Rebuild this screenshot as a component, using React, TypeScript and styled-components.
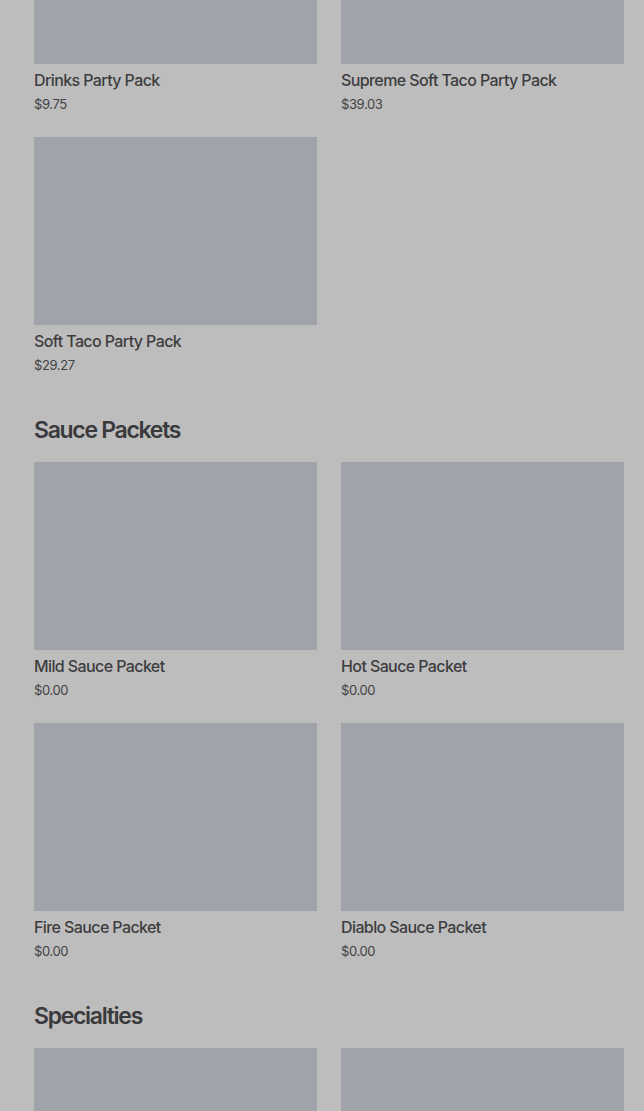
import styled, { createGlobalStyle } from "styled-components";

type Item = { name?: string; price?: string };

const partyPacks: Item[] = [
  { name: "Drinks Party Pack", price: "$9.75" },
  { name: "Supreme Soft Taco Party Pack", price: "$39.03" },
  { name: "Soft Taco Party Pack", price: "$29.27" },
];

const saucePackets: Item[] = [
  { name: "Mild Sauce Packet", price: "$0.00" },
  { name: "Hot Sauce Packet", price: "$0.00" },
  { name: "Fire Sauce Packet", price: "$0.00" },
  { name: "Diablo Sauce Packet", price: "$0.00" },
];

// names are below the fold
const specialties: Item[] = [{}, {}];

const Global = createGlobalStyle`
  body {
    margin: 0;
    background: #bdbdbd;
    font-family: Inter, "Noto Sans", sans-serif;
    color: #3d3d3f;
    overflow: hidden;
  }
`;

const Page = styled.div`
  padding: 0 20px 0 34px;
  height: 1111px;
  overflow: hidden;
`;

const Section = styled.section<{ $scrolled?: boolean }>`
  margin-top: ${(p) => (p.$scrolled ? "-124px" : "0")};
`;

const Heading = styled.h2`
  margin: 39px 0 16px;
  font-size: 23px;
  line-height: 32px;
  font-weight: 600;
  letter-spacing: -1.3px;
  color: #3a3a3c;
`;

const Grid = styled.div`
  display: grid;
  grid-template-columns: 1fr 1fr;
  column-gap: 24px;
  row-gap: 23px;
`;

const Card = styled.div`
  display: flex;
  flex-direction: column;
`;

const Thumb = styled.div`
  height: 188px;
  background: #a1a3aa;
`;

const Name = styled.div`
  margin-top: 6px;
  font-size: 16px;
  line-height: 20px;
  font-weight: 500;
  letter-spacing: -0.6px;
`;

const Price = styled.div`
  margin-top: 4px;
  font-size: 13px;
  line-height: 20px;
  letter-spacing: -0.4px;
  color: #424244;
`;

function Products({ items }: { items: Item[] }) {
  return (
    <Grid>
      {items.map((it, i) => (
        <Card key={i}>
          <Thumb />
          {it.name && <Name>{it.name}</Name>}
          {it.price && <Price>{it.price}</Price>}
        </Card>
      ))}
    </Grid>
  );
}

export default function App() {
  return (
    <Page>
      <Global />
      <Section $scrolled>
        <Products items={partyPacks} />
      </Section>
      <Section>
        <Heading>Sauce Packets</Heading>
        <Products items={saucePackets} />
      </Section>
      <Section>
        <Heading>Specialties</Heading>
        <Products items={specialties} />
      </Section>
    </Page>
  );
}
